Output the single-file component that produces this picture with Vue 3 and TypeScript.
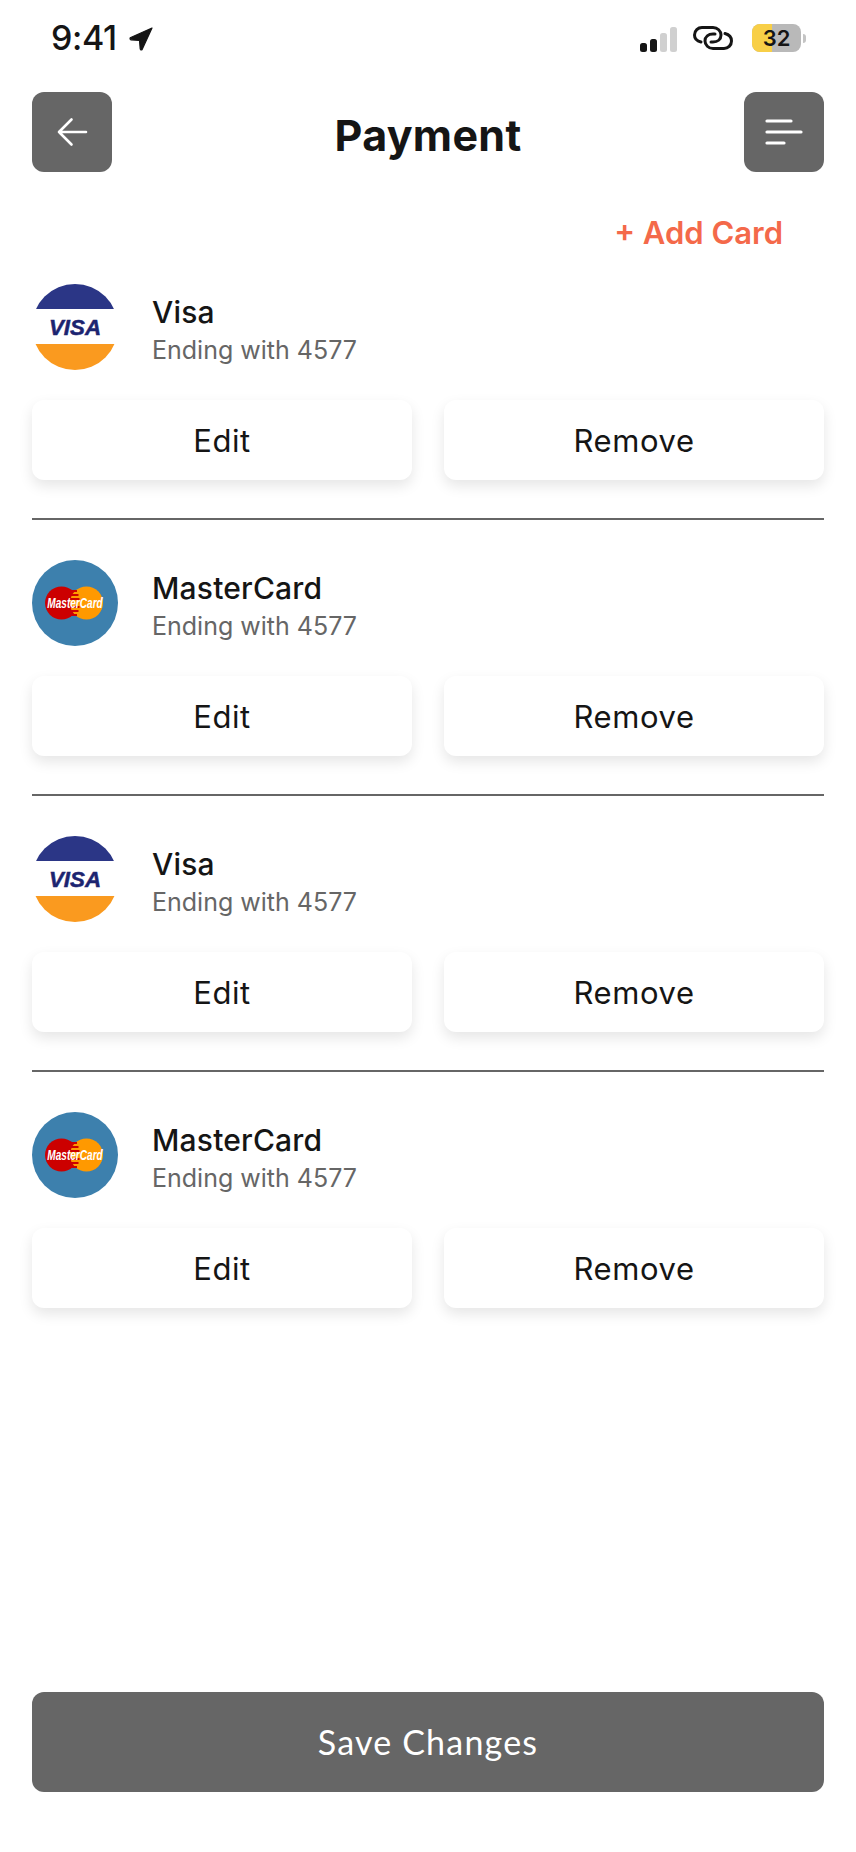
<script setup lang="ts">
type Brand = 'visa' | 'mastercard'

interface Card {
  id: number
  brand: Brand
  name: string
  last4: string
}

const cards: Card[] = [
  { id: 1, brand: 'visa', name: 'Visa', last4: '4577' },
  { id: 2, brand: 'mastercard', name: 'MasterCard', last4: '4577' },
  { id: 3, brand: 'visa', name: 'Visa', last4: '4577' },
  { id: 4, brand: 'mastercard', name: 'MasterCard', last4: '4577' }
]
</script>

<template>
  <div class="screen">
    <div class="status">
      <div class="status-left">
        <span class="time">9:41</span>
        <svg class="loc" width="24" height="24" viewBox="0 0 24 24">
          <path d="M23 1 L1.200 10.800 Q.6 12.500 2 12.800 L10.500 13.500 L11.200 22 Q11.500 23.500 13 22.800 Z" fill="#151515" stroke="#151515" stroke-width="1.200" stroke-linejoin="round" />
        </svg>
      </div>
      <div class="status-right">
        <svg class="signal" width="37" height="25" viewBox="0 0 37 25">
          <rect x="0" y="16" width="7" height="9" rx="2.5" fill="#151515" />
          <rect x="10" y="12" width="7" height="13" rx="2.5" fill="#151515" />
          <rect x="20" y="6" width="7" height="19" rx="2.5" fill="#d0d0d0" />
          <rect x="30" y="0" width="7" height="25" rx="2.5" fill="#d0d0d0" />
        </svg>
        <svg class="link" width="40" height="24" viewBox="0 0 40 24" fill="none" stroke="#151515" stroke-width="3" stroke-linecap="round">
          <path d="M8 16 C3.500 15 1.500 12.500 1.500 9 C1.500 4.500 5 1.500 9 1.500 H20 C24.500 1.500 28 5 28 9 C28 13.500 24.500 16 20 16 H18" />
          <path d="M32 7.500 C36 8.500 38.500 11.500 38.500 15 C38.500 19.500 35 22.500 31 22.500 H20 C15.500 22.500 12 19 12 15 C12 10.500 15.500 8 20 8 H22" />
        </svg>
        <div class="battery">
          <div class="battery-fill"></div>
          <span class="battery-num">32</span>
        </div>
        <div class="battery-nub"></div>
      </div>
    </div>

    <header class="topbar">
      <button class="square" type="button" aria-label="Back">
        <svg width="32" height="30" viewBox="0 0 32 30" fill="none" stroke="#fff" stroke-width="2.6" stroke-linecap="round" stroke-linejoin="round">
          <path d="M30 15 H3 M15.500 2.500 L3 15 L15.500 27.500" />
        </svg>
      </button>
      <h1 class="title">Payment</h1>
      <button class="square" type="button" aria-label="Menu">
        <svg width="38" height="28" viewBox="0 0 38 28" fill="none" stroke="#fff" stroke-width="3.2" stroke-linecap="round">
          <path d="M2 3 H26 M2 14 H36 M2 25 H19" />
        </svg>
      </button>
    </header>

    <div class="add-row">
      <a class="add-card">+ Add Card</a>
    </div>

    <section v-for="(card, i) in cards" :key="card.id" class="item" :class="{ divided: i < cards.length - 1 }">
      <div class="item-head">
        <svg v-if="card.brand === 'visa'" class="logo" width="86" height="86" viewBox="0 0 86 86">
          <defs>
            <clipPath :id="`visa-circle-${card.id}`"><circle cx="43" cy="43" r="43" /></clipPath>
          </defs>
          <g :clip-path="`url(#visa-circle-${card.id})`">
            <rect x="0" y="0" width="86" height="25" fill="#2b3686" />
            <rect x="0" y="60" width="86" height="26" fill="#fa9a1f" />
          </g>
          <text x="43" y="50.5" text-anchor="middle" textLength="52" lengthAdjust="spacingAndGlyphs" class="visa-word">VISA</text>
        </svg>
        <svg v-else class="logo" width="86" height="86" viewBox="0 0 86 86">
          <circle cx="43" cy="43" r="43" fill="#3d80ad" />
          <circle cx="29.5" cy="43" r="16.5" fill="#cc0000" />
          <circle cx="54.5" cy="43" r="16.5" fill="#ff9900" />
          <path d="M38 31 H45 M38 35 H46.500 M38 39 H47.500 M38 47 H47.500 M38 51 H46.500 M38 55 H45" stroke="#cc0000" stroke-width="1.8" />
          <text transform="translate(43 48) scale(.72 1)" text-anchor="middle" class="mc-word">MasterCard</text>
        </svg>
        <div class="info">
          <div class="name">{{ card.name }}</div>
          <div class="ending">Ending with {{ card.last4 }}</div>
        </div>
      </div>
      <div class="actions">
        <button class="action" type="button">Edit</button>
        <button class="action" type="button">Remove</button>
      </div>
    </section>

    <button class="save" type="button">Save Changes</button>
  </div>
</template>

<style>
html, body {
  margin: 0;
  background: #fff;
}
</style>

<style scoped>
.screen {
  box-sizing: border-box;
  width: 856px;
  height: 1852px;
  padding: 0 32px 60px;
  display: flex;
  flex-direction: column;
  background: #fff;
  font-family: "Inter", "Liberation Sans", sans-serif;
  color: #151515;
}

.status {
  height: 92px;
  flex: none;
  display: flex;
  justify-content: space-between;
  align-items: flex-start;
  padding: 24px 18px 0 19px;
  box-sizing: border-box;
}
.status-left { display: flex; align-items: center; gap: 12px; height: 28px; }
.time { font-size: 34px; font-weight: 500; line-height: 28px; letter-spacing: -.4px; }
.loc { margin-top: 2px; }
.status-right { display: flex; align-items: center; height: 28px; }
.signal { margin-top: 2px; }
.link { margin-left: 16px; margin-right: 19px; }
.battery {
  position: relative;
  width: 49px;
  height: 28px;
  border-radius: 8px;
  background: #b9b9b9;
  overflow: hidden;
  display: flex;
  align-items: center;
  justify-content: center;
}
.battery-fill { position: absolute; left: 0; top: 0; bottom: 0; width: 20px; background: #f8cf47; }
.battery-num { position: relative; font-size: 22px; font-weight: 600; line-height: 1; }
.battery-nub { width: 3px; height: 9px; margin-left: 2px; border-radius: 0 3px 3px 0; background: #c4c4c4; }

.topbar {
  height: 80px;
  flex: none;
  display: flex;
  align-items: center;
  justify-content: space-between;
}
.square {
  width: 80px;
  height: 80px;
  padding: 0;
  border: 0;
  border-radius: 12px;
  background: #666;
  display: flex;
  align-items: center;
  justify-content: center;
}
.title {
  margin: 5px 0 0;
  font-size: 43px;
  font-weight: 700;
  line-height: 48px;
  letter-spacing: .3px;
}

.add-row {
  height: 112px;
  flex: none;
  box-sizing: border-box;
  padding: 43px 41px 0 0;
  display: flex;
  justify-content: flex-end;
}
.add-card {
  font-size: 31px;
  font-weight: 600;
  line-height: 36px;
  color: #f4694a;
}

.item { flex: none; }
.item.divided {
  padding-bottom: 38px;
  border-bottom: 2px solid #666;
  margin-bottom: 40px;
}
.item-head { display: flex; align-items: center; height: 86px; }
.logo { flex: none; }
.info { margin-left: 34px; padding-top: 10px; }
.name { font-size: 30px; font-weight: 500; line-height: 35px; letter-spacing: .2px; }
.ending { margin-top: 2px; font-size: 25px; font-weight: 400; line-height: 37px; color: #666; }
.visa-word { font: italic 700 22px "Liberation Sans", sans-serif; fill: #1c2470; stroke: #1c2470; stroke-width: .5px; }
.mc-word { font: italic 700 14px "Liberation Sans", sans-serif; fill: #fff; }

.actions {
  margin-top: 30px;
  display: grid;
  grid-template-columns: 380px 380px;
  justify-content: space-between;
}
.action {
  height: 80px;
  padding: 1px 0 0;
  border: 0;
  border-radius: 12px;
  background: #fff;
  box-shadow: 0 6px 14px rgba(0, 0, 0, .1);
  font: 400 31px "Inter", "Liberation Sans", sans-serif;
  letter-spacing: .6px;
  color: #151515;
}

.save {
  margin-top: auto;
  flex: none;
  height: 100px;
  padding: 0 0 2px;
  border: 0;
  border-radius: 12px;
  background: #666;
  color: #fff;
  font: 400 34px "Lato", "Liberation Sans", sans-serif;
  letter-spacing: 1.2px;
}
</style>
